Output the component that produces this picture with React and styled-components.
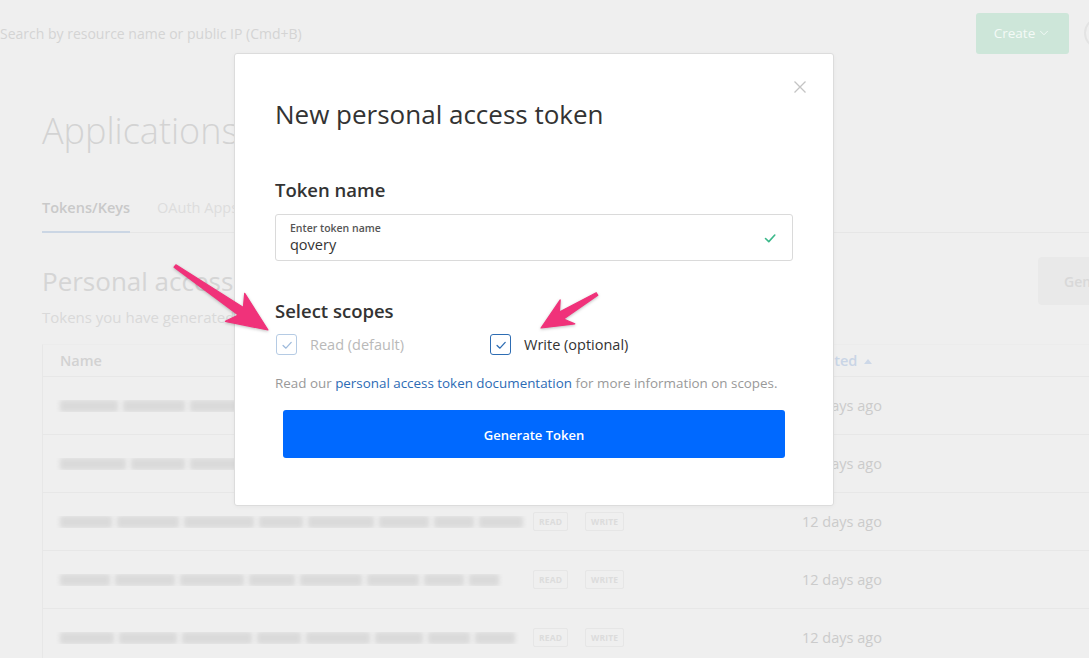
import React from 'react';
import styled, { createGlobalStyle } from 'styled-components';
import { ChevronDown } from 'lucide-react';

const GlobalStyle = createGlobalStyle`
  html, body { margin: 0; padding: 0; background: #efefef; }
  body { font-family: "Open Sans", Lato, sans-serif; -webkit-font-smoothing: antialiased; }
  * { box-sizing: border-box; }
`;

const Page = styled.div`
  position: relative;
  width: 1089px;
  height: 658px;
  overflow: hidden;
  background: #efefef;
`;

/* ---------- background page ---------- */
const TopBar = styled.header`
  display: flex;
  align-items: center;
  gap: 15px;
  width: 1116px;
  height: 66px;
`;
const Search = styled.div`
  flex: 1;
  font-size: 14px;
  color: #d4d4d4;
`;
const CreateButton = styled.div`
  display: flex;
  align-items: center;
  justify-content: center;
  gap: 2px;
  width: 93px;
  height: 41px;
  border-radius: 3px;
  background: #cde6d9;
  color: #f4faf7;
  font-size: 13.5px;
`;
const Avatar = styled.div`
  width: 32px;
  height: 32px;
  border-radius: 50%;
  border: 2px solid #e3e3e3;
`;

const Content = styled.main`
  width: 1188px;
  padding-left: 42px;
`;
const PageTitle = styled.h1`
  margin: 43px 0 0;
  font-size: 36px;
  line-height: 44px;
  font-weight: 300;
  color: #d3d3d3;
  white-space: nowrap;
`;
const TabBar = styled.nav`
  display: flex;
  gap: 27px;
  margin-top: 45px;
  border-bottom: 1px solid #e6e6e6;
`;
const Tab = styled.div`
  padding-bottom: 13px;
  margin-bottom: -1px;
  font-size: 14.5px;
  line-height: 20px;
  font-weight: ${p => (p.$active ? 600 : 400)};
  color: ${p => (p.$active ? '#c9c9c9' : '#dddddd')};
  border-bottom: 2px solid ${p => (p.$active ? '#cbd6e4' : 'transparent')};
`;
const SectionHeader = styled.div`
  display: flex;
  align-items: center;
  justify-content: space-between;
  height: 48px;
  margin-top: 24px;
`;
const SectionTitle = styled.h2`
  margin: 0;
  font-size: 26px;
  font-weight: 400;
  color: #d5d5d5;
  white-space: nowrap;
`;
const GhostButton = styled.div`
  display: flex;
  align-items: center;
  width: 150px;
  height: 48px;
  padding-left: 26px;
  border-radius: 4px;
  background: #e9e9e9;
  color: #d8d8d8;
  font-size: 14px;
  font-weight: 600;
  white-space: nowrap;
  overflow: hidden;
`;
const SubText = styled.p`
  margin: 2px 0 0;
  font-size: 15px;
  line-height: 20px;
  color: #d9d9d9;
  white-space: nowrap;
`;
const Table = styled.div`
  margin-top: 17px;
  border-left: 1px solid #e7e7e7;
  border-top: 1px solid #ececec;
`;
const Row = styled.div`
  display: grid;
  grid-template-columns: 490px 52px 217px 1fr;
  align-items: center;
  height: ${p => (p.$head ? '31px' : '58px')};
  border-top: ${p => (p.$head ? 'none' : '1px solid #e7e7e7')};
`;
const NameCell = styled.div`
  display: flex;
  align-items: center;
  gap: 5px;
  padding-left: 17px;
  overflow: hidden;
`;
const HeadText = styled.span`
  font-size: 14.5px;
  font-weight: 600;
  color: ${p => (p.$sorted ? '#c9d5e6' : '#d2d2d2')};
  display: inline-flex;
  align-items: center;
  gap: 7px;
`;
const BlurBar = styled.span`
  flex: none;
  height: 12px;
  border-radius: 2px;
  background: #dadada;
  filter: blur(2.2px);
`;
const Badge = styled.span`
  justify-self: start;
  padding: 3px 5px;
  border: 1px solid #e6e6e6;
  border-radius: 2px;
  font-size: 8.5px;
  font-weight: 700;
  letter-spacing: 0.2px;
  color: #dcdcdc;
`;
const DateText = styled.span`
  font-size: 14.5px;
  color: #cbcbcb;
`;

/* ---------- modal ---------- */
const Modal = styled.section`
  position: absolute;
  left: 234px;
  top: 53px;
  width: 600px;
  padding: 45px 40px 47px;
  background: #fff;
  border: 1px solid #dcdcdc;
  border-radius: 3px;
  box-shadow: 0 1px 4px rgba(0, 0, 0, 0.04);
`;
const CloseButton = styled.button`
  position: absolute;
  top: 26px;
  right: 26px;
  width: 14px;
  height: 14px;
  padding: 0;
  border: 0;
  background: none;
  display: flex;
`;
const ModalTitle = styled.h2`
  margin: 0;
  font-size: 26px;
  line-height: 30px;
  font-weight: 400;
  color: #333;
`;
const FieldLabel = styled.h3`
  margin: ${p => p.$top} 0 0;
  font-size: 18.5px;
  line-height: 24px;
  font-weight: 600;
  color: #333;
`;
const InputBox = styled.div`
  display: flex;
  align-items: center;
  justify-content: space-between;
  margin-top: 12px;
  height: 47px;
  padding: 0 14px 0 14px;
  border: 1px solid #dadada;
  border-radius: 3px;
`;
const InputInner = styled.div`
  display: flex;
  flex-direction: column;
  gap: 1px;
`;
const InputLabel = styled.span`
  font-size: 10.5px;
  line-height: 14px;
  font-weight: 600;
  color: #555;
`;
const InputValue = styled.span`
  font-size: 14.5px;
  line-height: 18px;
  color: #333;
`;
const Scopes = styled.div`
  display: grid;
  grid-template-columns: 214px 1fr;
  margin-top: 11px;
  padding-left: 1px;
`;
const ScopeOption = styled.label`
  display: flex;
  align-items: center;
  gap: 13px;
  font-size: 14.5px;
  color: ${p => (p.$disabled ? '#b9b9b9' : '#333')};
`;
const Box = styled.span`
  display: flex;
  align-items: center;
  justify-content: center;
  width: 21px;
  height: 21px;
  border: 1px solid ${p => (p.$disabled ? '#b5cbe4' : '#2e6db3')};
  border-radius: 3px;
  color: ${p => (p.$disabled ? '#9fbbdc' : '#2e6db3')};
`;
const Help = styled.p`
  margin: 19px 0 0;
  font-size: 13.4px;
  line-height: 18px;
  color: #999;
  white-space: nowrap;
`;
const DocLink = styled.a`
  color: #2c6bb5;
  text-decoration: none;
`;
const PrimaryButton = styled.button`
  display: block;
  width: calc(100% - 16px);
  height: 48px;
  margin: 18px 8px 0;
  padding: 1px 0 0;
  border: 0;
  border-radius: 3px;
  background: #0069ff;
  color: #fff;
  font-family: inherit;
  font-size: 13px;
  font-weight: 600;
`;

/* ---------- annotations ---------- */
const Annotations = styled.svg`
  position: absolute;
  left: 0;
  top: 0;
  pointer-events: none;
  filter: drop-shadow(0 1px 1.5px rgba(0, 0, 0, 0.25));
`;

function arrowPath([x1, y1], [x2, y2], headLen, headHalf, tailW, neckW) {
  const dx = x2 - x1, dy = y2 - y1, L = Math.hypot(dx, dy);
  const ux = dx / L, uy = dy / L, nx = -uy, ny = ux;
  const bx = x2 - ux * headLen, by = y2 - uy * headLen;
  const sweep = 5;
  const pts = [
    [x1 + nx * tailW / 2, y1 + ny * tailW / 2],
    [bx + nx * neckW / 2 + ux * 2, by + ny * neckW / 2 + uy * 2],
    [bx + nx * headHalf - ux * sweep, by + ny * headHalf - uy * sweep],
    [x2, y2],
    [bx - nx * headHalf - ux * sweep, by - ny * headHalf - uy * sweep],
    [bx - nx * neckW / 2 + ux * 2, by - ny * neckW / 2 + uy * 2],
    [x1 - nx * tailW / 2, y1 - ny * tailW / 2],
  ];
  return 'M' + pts.map(p => p.map(v => v.toFixed(1)).join(',')).join(' L') + ' Z';
}

const Tick = ({ size = 14, width = 1.5 }) => (
  <svg width={size} height={size} viewBox="0 0 16 16" fill="none">
    <polyline points="3.5,8.5 6.8,11.6 12.8,5" stroke="currentColor" strokeWidth={width} strokeLinecap="round" strokeLinejoin="round" />
  </svg>
);

const rows = [
  { bars: [58, 62, 48, 70, 60, 50], badges: false },
  { bars: [66, 54, 60, 64, 56, 40], badges: false },
  { bars: [52, 62, 70, 44, 66, 50, 40, 44], badges: true },
  { bars: [50, 60, 64, 46, 62, 52, 40, 30], badges: true },
  { bars: [54, 58, 70, 44, 64, 48, 42, 40], badges: true },
];

export default function App() {
  return (
    <Page>
      <GlobalStyle />
      <TopBar>
        <Search>Search by resource name or public IP (Cmd+B)</Search>
        <CreateButton>Create<ChevronDown size={14} strokeWidth={1.6} /></CreateButton>
        <Avatar />
      </TopBar>
      <Content>
        <PageTitle>Applications</PageTitle>
        <TabBar>
          <Tab $active>Tokens/Keys</Tab>
          <Tab>OAuth Apps</Tab>
        </TabBar>
        <SectionHeader>
          <SectionTitle>Personal access</SectionTitle>
          <GhostButton>Generate</GhostButton>
        </SectionHeader>
        <SubText>Tokens you have generated</SubText>
        <Table>
          <Row $head>
            <NameCell><HeadText>Name</HeadText></NameCell>
            <span />
            <span />
            <HeadText $sorted>
              Created
              <svg width="8" height="6" viewBox="0 0 8 6"><path d="M0 6 L4 1 L8 6 Z" fill="#cdd8e8" /></svg>
            </HeadText>
          </Row>
          {rows.map((r, i) => (
            <Row key={i}>
              <NameCell>
                {r.bars.map((w, j) => <BlurBar key={j} style={{ width: w }} />)}
              </NameCell>
              {r.badges ? <Badge>READ</Badge> : <span />}
              {r.badges ? <Badge>WRITE</Badge> : <span />}
              <DateText>12 days ago</DateText>
            </Row>
          ))}
        </Table>
      </Content>

      <Modal>
        <CloseButton aria-label="Close">
          <svg width="14" height="14" viewBox="0 0 14 14">
            <path d="M1.5 1.5 L12.5 12.5 M12.5 1.5 L1.5 12.5" stroke="#c4c4c4" strokeWidth="1.3" />
          </svg>
        </CloseButton>
        <ModalTitle>New personal access token</ModalTitle>
        <FieldLabel $top="49px">Token name</FieldLabel>
        <InputBox>
          <InputInner>
            <InputLabel>Enter token name</InputLabel>
            <InputValue>qovery</InputValue>
          </InputInner>
          <span style={{ color: '#3bb88a', display: 'flex' }}><Tick size={16} width={1.6} /></span>
        </InputBox>
        <FieldLabel $top="38px">Select scopes</FieldLabel>
        <Scopes>
          <ScopeOption $disabled>
            <Box $disabled><Tick size={14} /></Box>
            Read (default)
          </ScopeOption>
          <ScopeOption>
            <Box><Tick size={14} /></Box>
            Write (optional)
          </ScopeOption>
        </Scopes>
        <Help>
          Read our <DocLink href="#">personal access token documentation</DocLink> for more information on scopes.
        </Help>
        <PrimaryButton>Generate Token</PrimaryButton>
      </Modal>

      <Annotations width="1089" height="658" viewBox="0 0 1089 658">
        <path d={arrowPath([175, 266], [268, 330], 35, 17, 3, 9)} fill="#f0327a" stroke="#f0327a" strokeWidth="1.2" strokeLinejoin="round" />
        <path d={arrowPath([597, 294], [541, 328], 26, 14, 3, 8)} fill="#f0327a" stroke="#f0327a" strokeWidth="1.2" strokeLinejoin="round" />
      </Annotations>
    </Page>
  );
}
